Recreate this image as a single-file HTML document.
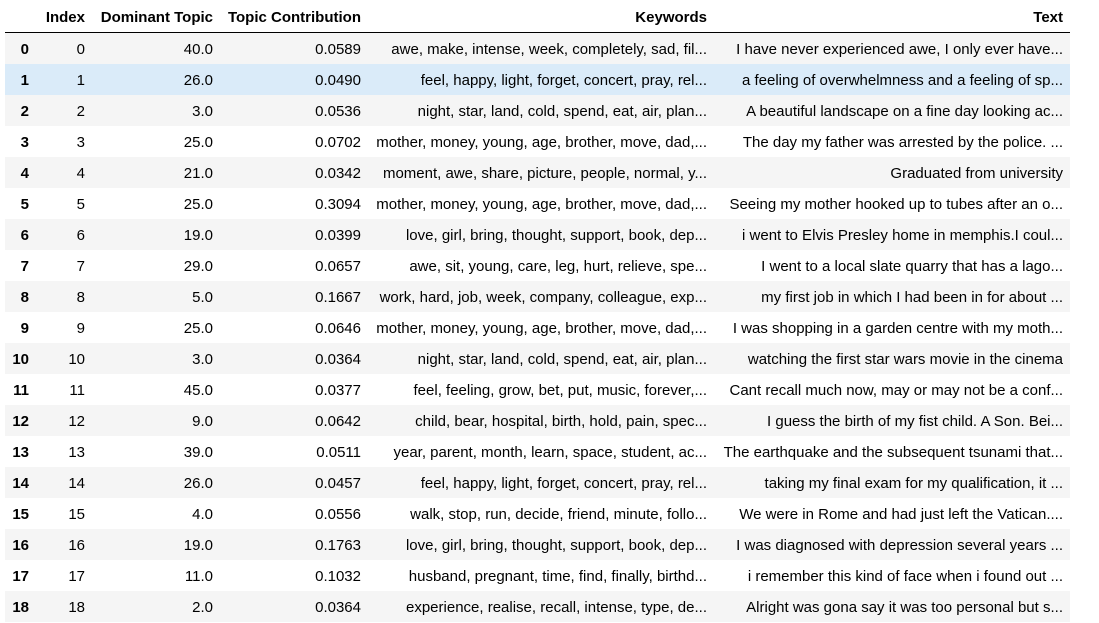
<!DOCTYPE html>
<html><head><meta charset="utf-8"><style>
body{margin:0;width:1099px;height:611px;overflow:hidden;background:#fff;font-family:"Liberation Sans",Arial,sans-serif;font-size:15px;color:#000}
.r{position:absolute;left:5px;width:1065px;height:31px}
.r span{position:absolute;top:1px;line-height:31px;white-space:nowrap;text-align:right}
.e{background:#f5f5f5}.h{background:#daebf9}
.a{right:1041px;font-weight:bold}.b{right:985px}.c{right:857px}.d{right:709px}.k{right:363px}.t{right:7px}
.hd span{font-weight:bold}
</style></head><body>
<div class="r hd" style="top:1px;height:31px"><span class="b">Index</span><span class="c">Dominant Topic</span><span class="d">Topic Contribution</span><span class="k">Keywords</span><span class="t">Text</span></div>
<div style="position:absolute;left:5px;top:32px;width:1065px;height:1px;background:#000"></div>
<div class="r e" style="top:33px"><span class="a">0</span><span class="b">0</span><span class="c">40.0</span><span class="d">0.0589</span><span class="k">awe, make, intense, week, completely, sad, fil...</span><span class="t">I have never experienced awe, I only ever have...</span></div>
<div class="r h" style="top:64px"><span class="a">1</span><span class="b">1</span><span class="c">26.0</span><span class="d">0.0490</span><span class="k">feel, happy, light, forget, concert, pray, rel...</span><span class="t">a feeling of overwhelmness and a feeling of sp...</span></div>
<div class="r e" style="top:95px"><span class="a">2</span><span class="b">2</span><span class="c">3.0</span><span class="d">0.0536</span><span class="k">night, star, land, cold, spend, eat, air, plan...</span><span class="t">A beautiful landscape on a fine day looking ac...</span></div>
<div class="r" style="top:126px"><span class="a">3</span><span class="b">3</span><span class="c">25.0</span><span class="d">0.0702</span><span class="k">mother, money, young, age, brother, move, dad,...</span><span class="t">The day my father was arrested by the police. ...</span></div>
<div class="r e" style="top:157px"><span class="a">4</span><span class="b">4</span><span class="c">21.0</span><span class="d">0.0342</span><span class="k">moment, awe, share, picture, people, normal, y...</span><span class="t">Graduated from university</span></div>
<div class="r" style="top:188px"><span class="a">5</span><span class="b">5</span><span class="c">25.0</span><span class="d">0.3094</span><span class="k">mother, money, young, age, brother, move, dad,...</span><span class="t">Seeing my mother hooked up to tubes after an o...</span></div>
<div class="r e" style="top:219px"><span class="a">6</span><span class="b">6</span><span class="c">19.0</span><span class="d">0.0399</span><span class="k">love, girl, bring, thought, support, book, dep...</span><span class="t">i went to Elvis Presley home in memphis.I coul...</span></div>
<div class="r" style="top:250px"><span class="a">7</span><span class="b">7</span><span class="c">29.0</span><span class="d">0.0657</span><span class="k">awe, sit, young, care, leg, hurt, relieve, spe...</span><span class="t">I went to a local slate quarry that has a lago...</span></div>
<div class="r e" style="top:281px"><span class="a">8</span><span class="b">8</span><span class="c">5.0</span><span class="d">0.1667</span><span class="k">work, hard, job, week, company, colleague, exp...</span><span class="t">my first job in which I had been in for about ...</span></div>
<div class="r" style="top:312px"><span class="a">9</span><span class="b">9</span><span class="c">25.0</span><span class="d">0.0646</span><span class="k">mother, money, young, age, brother, move, dad,...</span><span class="t">I was shopping in a garden centre with my moth...</span></div>
<div class="r e" style="top:343px"><span class="a">10</span><span class="b">10</span><span class="c">3.0</span><span class="d">0.0364</span><span class="k">night, star, land, cold, spend, eat, air, plan...</span><span class="t">watching the first star wars movie in the cinema</span></div>
<div class="r" style="top:374px"><span class="a">11</span><span class="b">11</span><span class="c">45.0</span><span class="d">0.0377</span><span class="k">feel, feeling, grow, bet, put, music, forever,...</span><span class="t">Cant recall much now, may or may not be a conf...</span></div>
<div class="r e" style="top:405px"><span class="a">12</span><span class="b">12</span><span class="c">9.0</span><span class="d">0.0642</span><span class="k">child, bear, hospital, birth, hold, pain, spec...</span><span class="t">I guess the birth of my fist child. A Son. Bei...</span></div>
<div class="r" style="top:436px"><span class="a">13</span><span class="b">13</span><span class="c">39.0</span><span class="d">0.0511</span><span class="k">year, parent, month, learn, space, student, ac...</span><span class="t">The earthquake and the subsequent tsunami that...</span></div>
<div class="r e" style="top:467px"><span class="a">14</span><span class="b">14</span><span class="c">26.0</span><span class="d">0.0457</span><span class="k">feel, happy, light, forget, concert, pray, rel...</span><span class="t">taking my final exam for my qualification, it ...</span></div>
<div class="r" style="top:498px"><span class="a">15</span><span class="b">15</span><span class="c">4.0</span><span class="d">0.0556</span><span class="k">walk, stop, run, decide, friend, minute, follo...</span><span class="t">We were in Rome and had just left the Vatican....</span></div>
<div class="r e" style="top:529px"><span class="a">16</span><span class="b">16</span><span class="c">19.0</span><span class="d">0.1763</span><span class="k">love, girl, bring, thought, support, book, dep...</span><span class="t">I was diagnosed with depression several years ...</span></div>
<div class="r" style="top:560px"><span class="a">17</span><span class="b">17</span><span class="c">11.0</span><span class="d">0.1032</span><span class="k">husband, pregnant, time, find, finally, birthd...</span><span class="t">i remember this kind of face when i found out ...</span></div>
<div class="r e" style="top:591px"><span class="a">18</span><span class="b">18</span><span class="c">2.0</span><span class="d">0.0364</span><span class="k">experience, realise, recall, intense, type, de...</span><span class="t">Alright was gona say it was too personal but s...</span></div>
</body></html>
